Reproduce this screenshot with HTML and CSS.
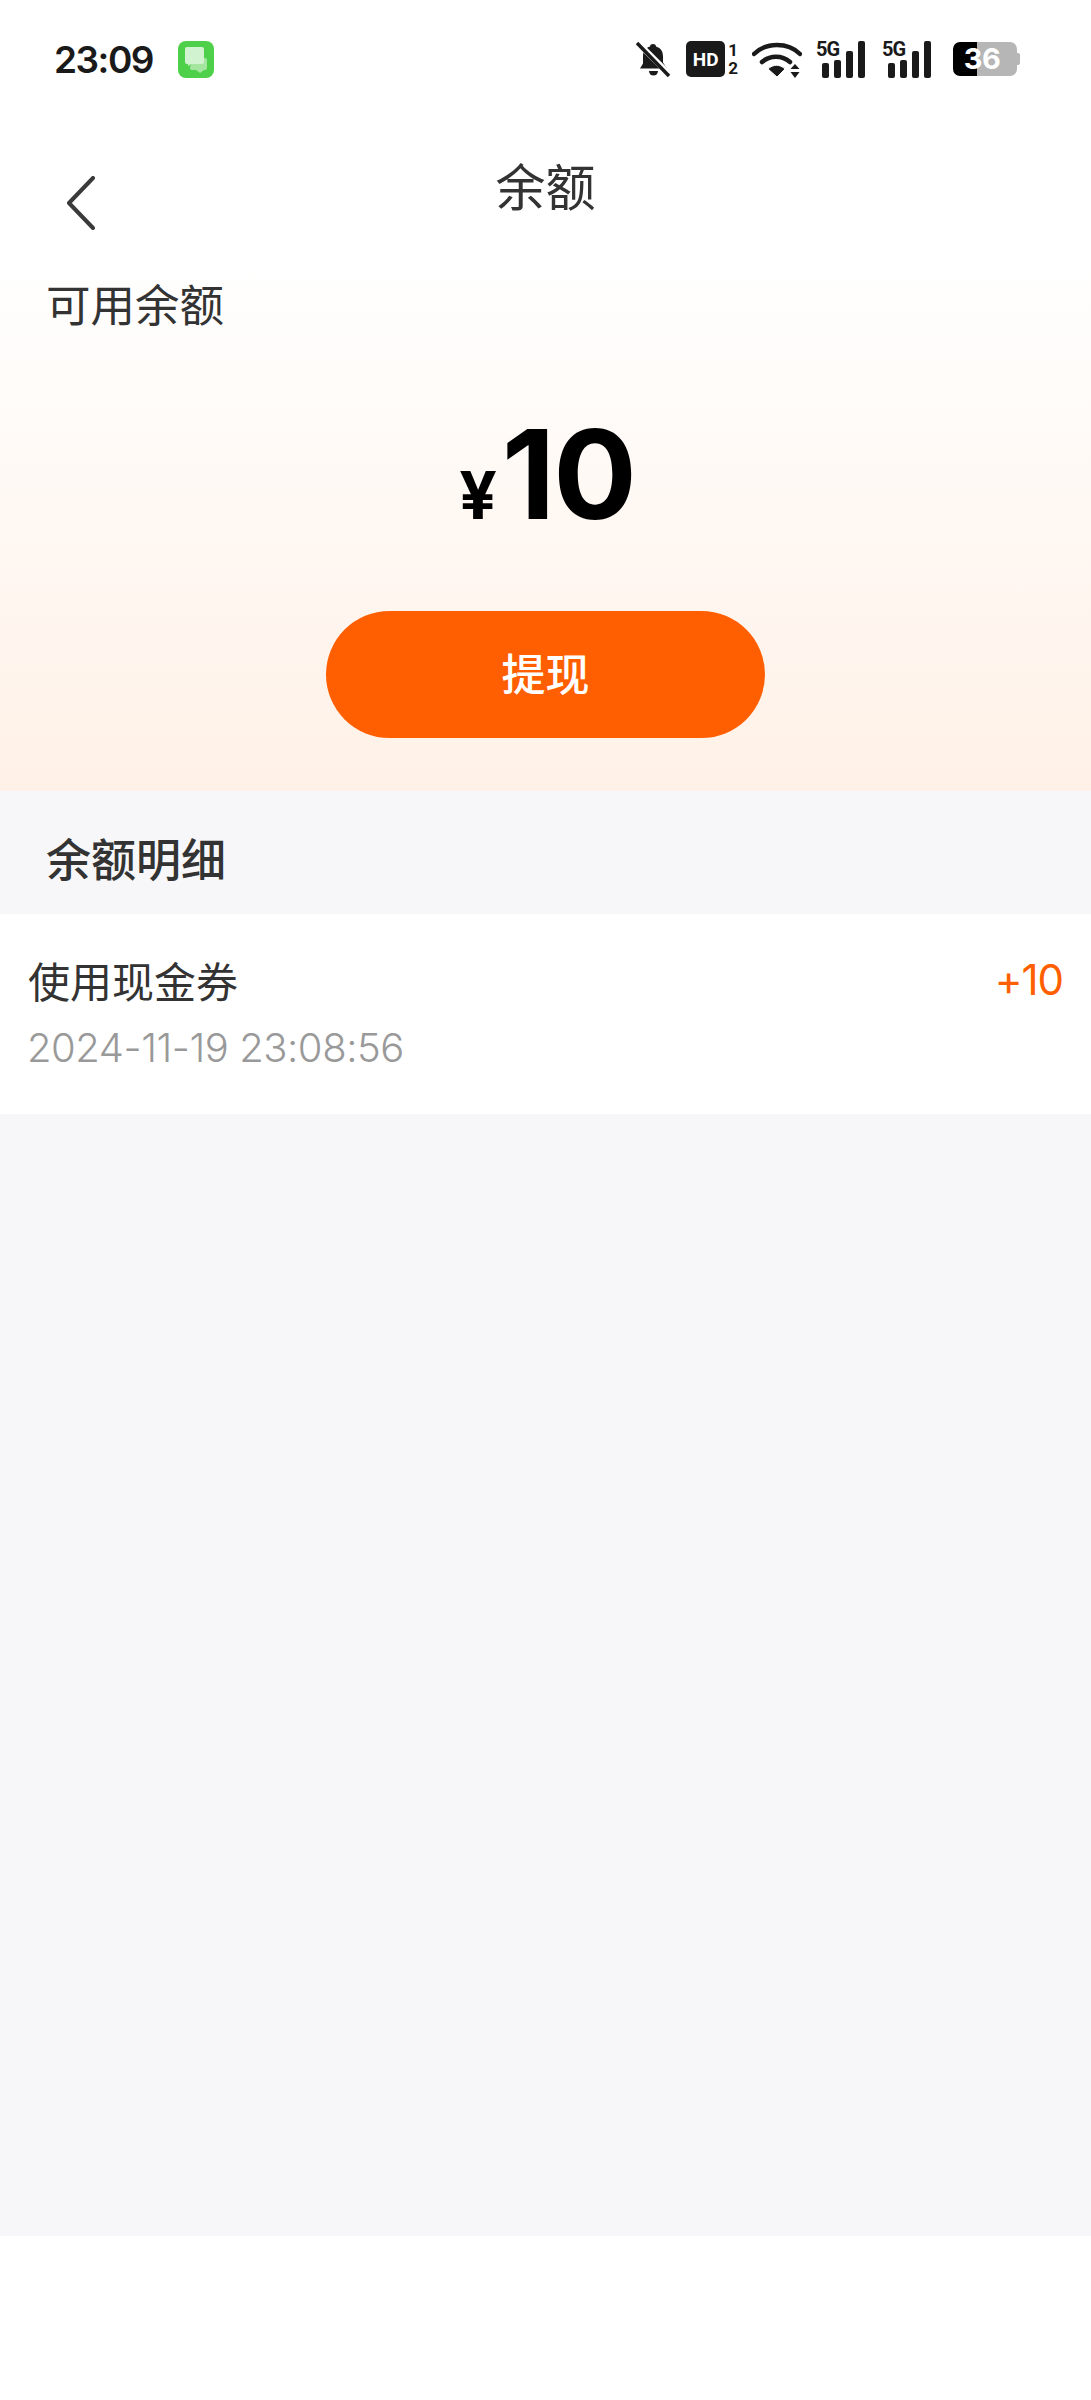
FILE: index.html
```html
<!DOCTYPE html>
<html lang="zh-CN">
<head>
    <meta charset="UTF-8">
    <meta name="viewport" content="width=device-width, initial-scale=1.0">
    <title>余额</title>
    <link rel="stylesheet" href="styles.css">
</head>
<body>
    <div class="page">
        <div class="status-bar">
            <div class="status-left">
                <span class="clock">23:09</span>
                <svg class="app-icon" width="36" height="37" viewBox="0 0 36 37">
                    <rect width="36" height="37" rx="8" fill="#4fd04a"/>
                    <path d="M14 17h13a2 2 0 0 1 2 2v8a2 2 0 0 1-2 2h-1l-4 3-4-3h-4a2 2 0 0 1-2-2z" fill="#a4e6a0"/>
                    <path d="M9 6h15a2 2 0 0 1 2 2v13a2 2 0 0 1-2 2H13l-3 2v-2H9a2 2 0 0 1-2-2V8a2 2 0 0 1 2-2z" fill="#d2f3d0"/>
                </svg>
            </div>
            <div class="status-right">
                <svg class="bell" width="37" height="37" viewBox="0 0 37 37">
                    <path d="M18 3c2 0 3 1 3 2.500 5 1.500 7 5 7 10v6l4 6H5l3-5V15c0-5 3-8.500 7-9.500C15 4 16 3 18 3z" fill="#1a1a1a"/>
                    <path d="M14 30h9a4.500 4.500 0 0 1-9 0z" fill="#1a1a1a"/>
                    <path d="M2 1l33 33" stroke="#fff" stroke-width="6"/>
                    <path d="M2 2l32 33" stroke="#1a1a1a" stroke-width="3.500"/>
                </svg>
                <div class="hd-group">
                    <span class="hd-box">HD</span>
                    <span class="hd-nums"><span>1</span><span>2</span></span>
                </div>
                <svg class="wifi" width="50" height="37" viewBox="0 0 50 37">
                    <path d="M2 13C14 1 36 1 48 13" fill="none" stroke="#1a1a1a" stroke-width="4.500" stroke-linecap="round"/>
                    <path d="M10 21c8-7 20-7 28 0" fill="none" stroke="#1a1a1a" stroke-width="4.500" stroke-linecap="round"/>
                    <path d="M16 28c5-5 12-5 17 0l-8 8z" fill="#1a1a1a" stroke="#fff" stroke-width="1"/>
                    <path d="M43 23l4.500 5h-9zM43 37l4.500-6h-9z" fill="#1a1a1a"/>
                </svg>
                <div class="signal">
                    <span class="net">5G</span>
                    <span class="bar bar-1"></span>
                    <span class="bar bar-2"></span>
                    <span class="bar bar-3"></span>
                    <span class="bar bar-4"></span>
                </div>
                <div class="signal signal-last">
                    <span class="net">5G</span>
                    <span class="bar bar-1"></span>
                    <span class="bar bar-2"></span>
                    <span class="bar bar-3"></span>
                    <span class="bar bar-4"></span>
                </div>
                <div class="battery">
                    <span class="battery-num">36</span>
                </div>
            </div>
        </div>

        <div class="nav">
            <svg class="back" width="32" height="54" viewBox="0 0 32 54">
                <path d="M28 2L4 27l24 25" fill="none" stroke="#3a3a3a" stroke-width="4" stroke-linecap="round" stroke-linejoin="round"/>
            </svg>
            <h1 class="nav-title">余额</h1>
        </div>

        <div class="hero">
            <div class="hero-label">可用余额</div>
            <div class="amount"><span class="yen">¥</span><span class="amount-num">10</span></div>
            <button class="withdraw" type="button">提现</button>
        </div>

        <div class="detail-title">余额明细</div>

        <div class="record">
            <div class="record-line">
                <span class="record-name">使用现金券</span>
                <span class="record-value">+10</span>
            </div>
            <div class="record-time">2024-11-19 23:08:56</div>
        </div>

        <div class="empty"></div>
        <div class="bottom"></div>
    </div>
</body>
</html>
```

FILE: styles.css
```css
* {
    box-sizing: border-box;
}
body {
    margin: 0;
    background-color: #fff;
    font-family: Inter, "Noto Sans CJK SC", sans-serif;
}
.page {
    display: flex;
    flex-direction: column;
    height: 2400px;
}
.status-bar {
    display: flex;
    justify-content: space-between;
    align-items: center;
    height: 118px;
    padding: 0 74px 0 54px;
}
.status-left {
    display: flex;
    align-items: center;
    gap: 25px;
}
.clock {
    font-size: 37px;
    font-weight: 600;
    letter-spacing: -1.500px;
    color: #1a1a1a;
}
.status-right {
    display: flex;
    align-items: center;
    gap: 14px;
}
.hd-group {
    display: flex;
    align-items: center;
    gap: 3px;
}
.hd-box {
    display: flex;
    align-items: center;
    justify-content: center;
    width: 39px;
    height: 36px;
    background: #1a1a1a;
    border-radius: 5px;
    color: #fff;
    font-size: 19px;
    font-weight: 700;
    font-family: Roboto, sans-serif;
}
.hd-nums {
    display: flex;
    flex-direction: column;
    font-family: Roboto, sans-serif;
    font-size: 17px;
    font-weight: 700;
    line-height: 18px;
    color: #1a1a1a;
}
.signal {
    position: relative;
    display: flex;
    align-items: flex-end;
    gap: 5px;
    width: 52px;
    height: 37px;
    padding-left: 6px;
}
.signal-last {
    margin-right: 5px;
}
.net {
    position: absolute;
    top: -2px;
    left: 0;
    font-family: Roboto, sans-serif;
    font-size: 20px;
    font-weight: 700;
    line-height: 20px;
    letter-spacing: -1px;
    color: #1a1a1a;
}
.bar {
    width: 7px;
    background: #1a1a1a;
    border-radius: 2px;
}
.bar-1 {
    height: 15px;
}
.bar-2 {
    height: 18px;
}
.bar-3 {
    height: 27px;
}
.bar-4 {
    height: 37px;
}
.battery {
    display: flex;
    align-items: center;
    justify-content: center;
    width: 64px;
    height: 34px;
    padding-right: 6px;
    border-radius: 7px;
    background: linear-gradient(to right, #000 0 24px, #b6b6b6 24px);
    position: relative;
}
.battery::after {
    content: "";
    position: absolute;
    right: -3px;
    top: 11px;
    width: 3px;
    height: 12px;
    background: #b6b6b6;
    border-radius: 0 2px 2px 0;
}
.battery-num {
    color: #fff;
    font-size: 29px;
    font-weight: 700;
    line-height: 34px;
    letter-spacing: -0.500px;
}
.nav {
    position: relative;
    display: flex;
    align-items: center;
    justify-content: center;
    height: 137px;
}
.back {
    position: absolute;
    left: 65px;
    top: 58px;
}
.nav-title {
    margin: 0 0 6px;
    font-size: 50px;
    font-weight: 400;
    color: #333;
}
.hero {
    display: flex;
    flex-direction: column;
    align-items: center;
    height: 536px;
    padding-top: 23px;
    background: linear-gradient(to bottom, #fff, #fff1e7);
}
.hero-label {
    align-self: flex-start;
    margin-left: 46px;
    font-size: 44.500px;
    line-height: 56px;
    color: #333;
}
.amount {
    display: flex;
    align-items: baseline;
    margin-top: 65px;
    padding-left: 3px;
    line-height: 150px;
    color: #000;
    font-weight: 700;
}
.yen {
    font-size: 66px;
    margin-right: 5px;
}
.amount-num {
    font-size: 124px;
    letter-spacing: -2px;
}
.withdraw {
    width: 439px;
    height: 127px;
    margin-top: 41px;
    padding-bottom: 6px;
    border: none;
    border-radius: 64px;
    background-color: #ff5f00;
    color: #fff;
    font-family: inherit;
    font-size: 44px;
    font-weight: 500;
}
.detail-title {
    height: 123px;
    padding: 9px 0 0 46px;
    background-color: #f7f7f9;
    font-size: 45px;
    font-weight: 500;
    line-height: 122px;
    color: #333;
}
.record {
    height: 200px;
    padding: 36px 28px 0;
    background-color: #fff;
}
.record-line {
    display: flex;
    justify-content: space-between;
    align-items: center;
    height: 58px;
}
.record-name {
    font-size: 42px;
    color: #333;
}
.record-value {
    font-size: 42px;
    letter-spacing: -1px;
    color: #ff5f00;
}
.record-time {
    margin-top: 16px;
    margin-left: -1px;
    font-size: 40px;
    font-weight: 300;
    line-height: 48px;
    letter-spacing: -0.450px;
    color: #999;
}
.empty {
    flex: 1;
    background-color: #f7f7f9;
}
.bottom {
    height: 164px;
    background-color: #fff;
}
```
